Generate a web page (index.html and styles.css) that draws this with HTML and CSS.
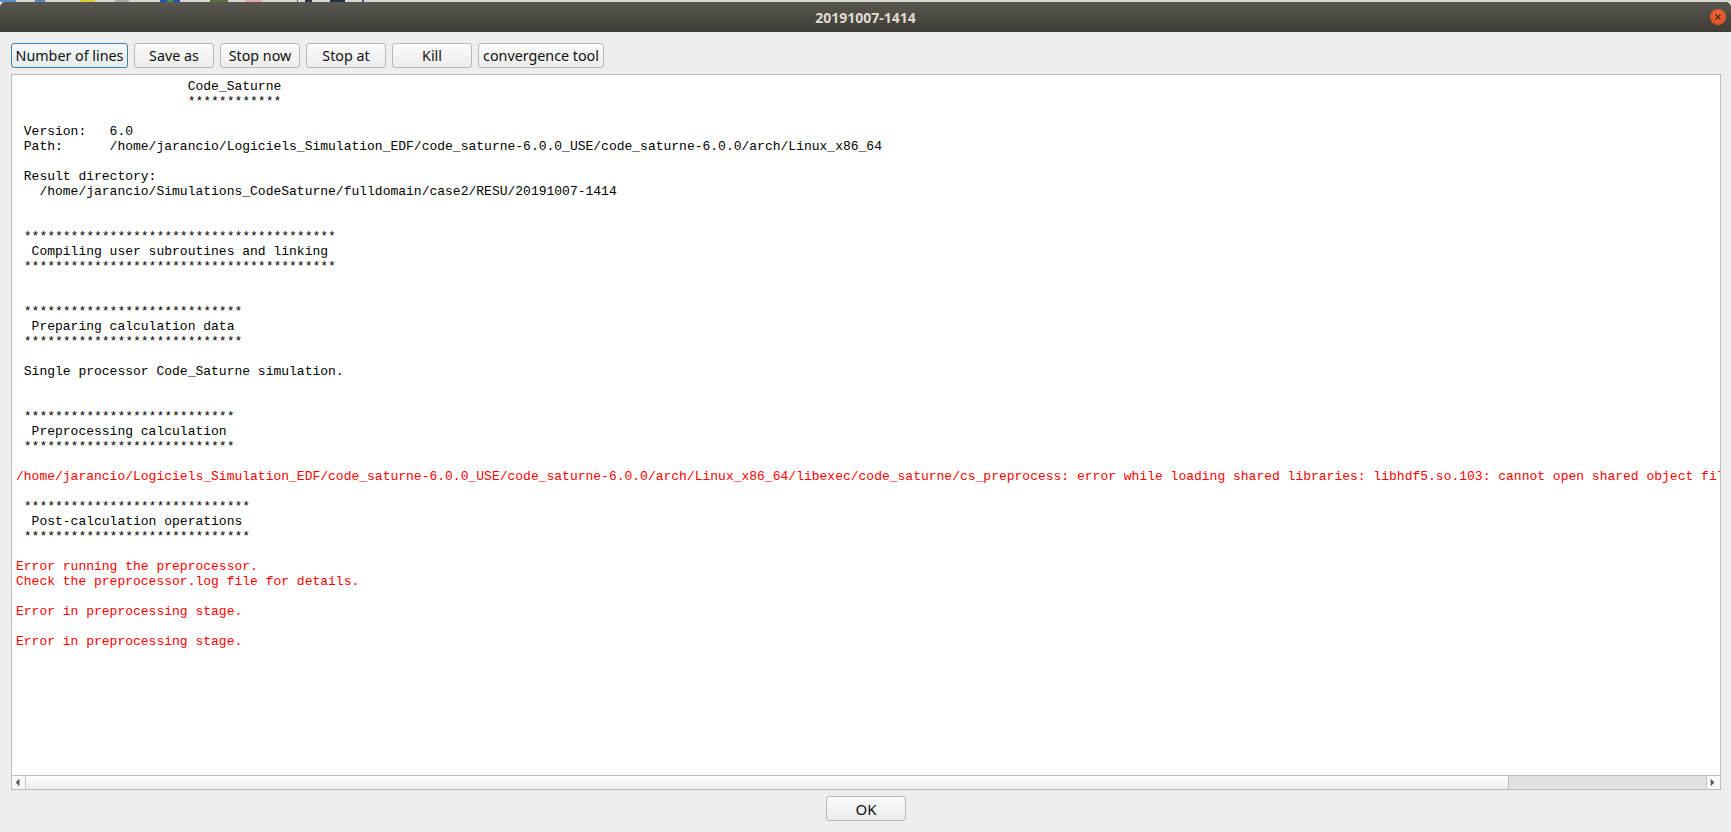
FILE: index.html
```html
<!DOCTYPE html>
<html lang="en">
<head>
<meta charset="utf-8">
<title>20191007-1414</title>
<link rel="stylesheet" href="styles.css">
</head>
<body>
<div class="desktop-strip"></div>
<div class="window">
  <header class="titlebar">
    <span class="title">20191007-1414</span>
    <span class="close"><svg width="16" height="16" viewBox="0 0 16 16"><path d="M5.5 5.5l5 5M10.5 5.5l-5 5" stroke="#4a2413" stroke-width="1.1" fill="none"/></svg></span>
  </header>
  <main class="content">
    <div class="toolbar">
      <button class="btn btn-focus w117">Number of lines</button>
      <button class="btn w80">Save as</button>
      <button class="btn w80">Stop now</button>
      <button class="btn w80">Stop at</button>
      <button class="btn w80">Kill</button>
      <button class="btn w126">convergence tool</button>
    </div>
    <div class="logbox">
      <div class="log"><pre class="logtext">                      Code_Saturne
                      ************

 Version:   6.0
 Path:      /home/jarancio/Logiciels_Simulation_EDF/code_saturne-6.0.0_USE/code_saturne-6.0.0/arch/Linux_x86_64

 Result directory:
   /home/jarancio/Simulations_CodeSaturne/fulldomain/case2/RESU/20191007-1414


 ****************************************
  Compiling user subroutines and linking
 ****************************************


 ****************************
  Preparing calculation data
 ****************************

 Single processor Code_Saturne simulation.


 ***************************
  Preprocessing calculation
 ***************************

<span class="err">/home/jarancio/Logiciels_Simulation_EDF/code_saturne-6.0.0_USE/code_saturne-6.0.0/arch/Linux_x86_64/libexec/code_saturne/cs_preprocess: error while loading shared libraries: libhdf5.so.103: cannot open shared object file: No such file or directory</span>

 *****************************
  Post-calculation operations
 *****************************

<span class="err">Error running the preprocessor.
Check the preprocessor.log file for details.

Error in preprocessing stage.

Error in preprocessing stage.</span></pre></div>
      <div class="hscroll">
        <span class="arrow-btn"><svg width="14" height="14" viewBox="0 0 14 14"><path d="M4 6.5l4-4v8z" fill="#555"/></svg></span>
        <span class="handle"></span>
        <span class="track"></span>
        <span class="arrow-btn arrow-right"><svg width="14" height="14" viewBox="0 0 14 14"><path d="M4 2.5l4 4-4 4z" fill="#555"/></svg></span>
      </div>
    </div>
    <div class="footer">
      <button class="btn ok">OK</button>
    </div>
  </main>
</div>
</body>
</html>
```
FILE: styles.css
```css
* { box-sizing: border-box; }
html, body { margin: 0; height: 100%; overflow: hidden; }
body {
  display: flex;
  flex-direction: column;
  background: #eeeeee;
  font-family: "Noto Sans", "Open Sans", sans-serif;
  color: #111;
}
.desktop-strip {
  height: 2px;
  flex: none;
  background: linear-gradient(90deg,
    #5d8fc4 0 16px, #d8d6d2 16px 35px,
    #4f86b8 35px 45px, #d8d6d2 45px 80px,
    #e2c63a 80px 95px, #d8d6d2 95px 115px,
    #a9a9a9 115px 129px, #d8d6d2 129px 160px,
    #2d4fb0 160px 167px, #3d9a4a 167px 173px, #2d4fb0 173px 180px, #d8d6d2 180px 210px,
    #5c6e3a 210px 228px, #d8d6d2 228px 245px,
    #e0a6b4 245px 262px, #d8d6d2 262px 297px,
    #3a5a80 297px 298px, #d8d6d2 298px 305px,
    #2a3a50 305px 312px, #d8d6d2 312px 330px,
    #1f2f4a 330px 345px, #d8d6d2 345px 362px,
    #3a5a80 362px 364px, #d8d6d2 364px);
}
.window { flex: 1; display: flex; flex-direction: column; min-height: 0; }
.titlebar {
  height: 30px;
  flex: none;
  display: flex;
  align-items: center;
  justify-content: center;
  position: relative;
  border-radius: 5px 5px 0 0;
  background: linear-gradient(#5a5650, #3e3c36);
  color: #dfdbd2;
  font-size: 14px;
  font-weight: 700;
}
.close {
  position: absolute;
  right: 5px;
  top: 7px;
  width: 16px;
  height: 16px;
  border-radius: 50%;
  background: radial-gradient(circle at 50% 35%, #f0673a, #d9491f);
  display: flex;
}
.content {
  flex: 1;
  min-height: 0;
  display: flex;
  flex-direction: column;
  padding: 11px 10px 0 11px;
}
.toolbar { display: flex; gap: 6px; height: 25px; flex: none; }
.btn {
  height: 25px;
  padding: 0;
  border: 1px solid #b8b8b8;
  border-radius: 3px;
  background: linear-gradient(#fbfbfb, #ececec);
  font-family: "Noto Sans", sans-serif;
  font-size: 14.3px;
  color: #111;
  white-space: nowrap;
}
.btn-focus { border-color: #3f7fa8; background: linear-gradient(#f5f8fa, #e6ebee); }
.w117 { width: 117px; }
.w80 { width: 80px; }
.w126 { width: 126px; }
.logbox {
  flex: none;
  height: 716px;
  margin-top: 6px;
  display: flex;
  flex-direction: column;
  border: 1px solid #bcbcbc;
  background: #fff;
}
.log { flex: 1; min-height: 0; overflow: hidden; padding: 4px 4px; }
.logtext {
  margin: 0;
  font-family: "Liberation Mono", monospace;
  font-size: 13px;
  line-height: 15px;
  color: #000;
  white-space: pre;
}
.err { color: #ff0000; }
.hscroll {
  flex: none;
  height: 14px;
  display: flex;
  border-top: 1px solid #bcbcbc;
}
.arrow-btn { width: 14px; flex: none; background: #f8f8f8; border-right: 1px solid #c4c4c4; display: flex; }
.arrow-right { border-right: 0; border-left: 1px solid #c4c4c4; }
.handle { flex: 1; background: linear-gradient(#ffffff, #ededed); border-right: 1px solid #bcbcbc; }
.track { width: 197px; flex: none; background: #e2e2e2; }
.footer { flex: none; display: flex; justify-content: center; padding-top: 6px; }
.ok { width: 80px; font-size: 15px; }
```
